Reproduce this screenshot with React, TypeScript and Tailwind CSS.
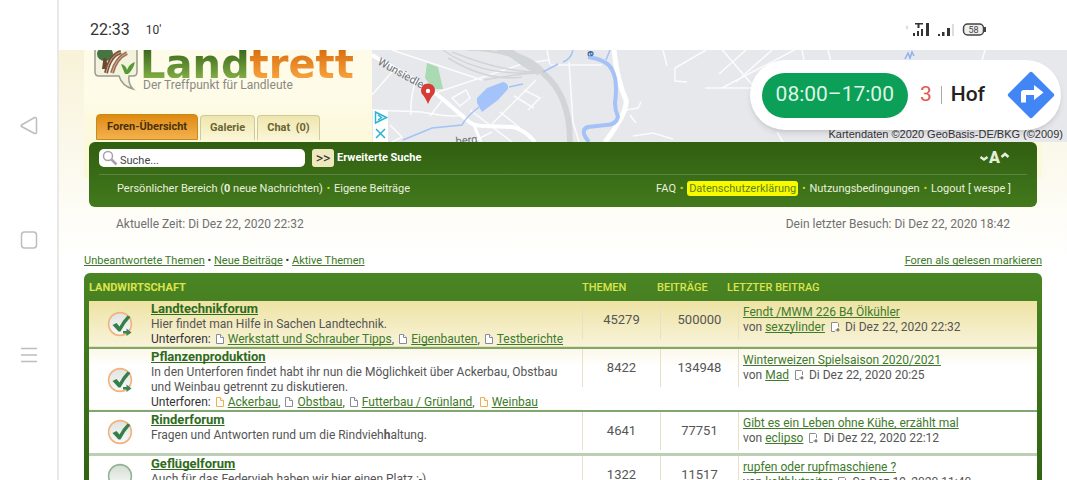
import type { ReactNode } from 'react';

type Sub = { name: string; unread?: boolean };

type Forum = {
  title: string;
  text: ReactNode;
  subs: Sub[];
  icon: 'unreadSub' | 'unread' | 'read';
  topics: string;
  posts: string;
  last: string;
  author: string;
  date: string;
  rowClass: string;
};

const forums: Forum[] = [
  {
    title: 'Landtechnikforum',
    text: 'Hier findet man Hilfe in Sachen Landtechnik.',
    subs: [{ name: 'Werkstatt und Schrauber Tipps' }, { name: 'Eigenbauten' }, { name: 'Testberichte' }],
    icon: 'unreadSub',
    topics: '45279',
    posts: '500000',
    last: 'Fendt /MWM 226 B4 Ölkühler',
    author: 'sexzylinder',
    date: 'Di Dez 22, 2020 22:32',
    rowClass: 'h-[47px] border-b-2 border-[#7fa673] bg-linear-to-b from-[#eee3a3] to-[#f8f3da]',
  },
  {
    title: 'Pflanzenproduktion',
    text: 'In den Unterforen findet habt ihr nun die Möglichkeit über Ackerbau, Obstbau und Weinbau getrennt zu diskutieren.',
    subs: [
      { name: 'Ackerbau', unread: true },
      { name: 'Obstbau' },
      { name: 'Futterbau / Grünland' },
      { name: 'Weinbau', unread: true },
    ],
    icon: 'unreadSub',
    topics: '8422',
    posts: '134948',
    last: 'Winterweizen Spielsaison 2020/2021',
    author: 'Mad',
    date: 'Di Dez 22, 2020 20:25',
    rowClass: 'h-[62px] border-b-2 border-[#7fa673] bg-linear-to-b from-[#fbf8e8] to-white to-30%',
  },
  {
    title: 'Rinderforum',
    text: (
      <>
        Fragen und Antworten rund um die Rindvieh<b>h</b>altung.
      </>
    ),
    subs: [],
    icon: 'unread',
    topics: '4641',
    posts: '77751',
    last: 'Gibt es ein Leben ohne Kühe, erzählt mal',
    author: 'eclipso',
    date: 'Di Dez 22, 2020 22:12',
    rowClass: 'h-[43px] border-b-3 border-[#bccfb5] bg-white',
  },
  {
    title: 'Geflügelforum',
    text: 'Auch für das Federvieh haben wir hier einen Platz :-)',
    subs: [],
    icon: 'read',
    topics: '1322',
    posts: '11517',
    last: 'rupfen oder rupfmaschiene ?',
    author: 'kaltblutreiter',
    date: 'So Dez 19, 2020 11:40',
    rowClass: 'h-[43px] border-b-2 border-[#7fa673] bg-white',
  },
];

function PageIcon({ color }: { color: string }) {
  return (
    <svg viewBox="0 0 8 10" className="mr-1 ml-[2px] inline-block h-[10px] w-2 align-[-1px]" fill="#fff" stroke={color}>
      <path d="M.5.5h4l3 3v6h-7z" />
      <path d="M4.5.5v3h3" />
    </svg>
  );
}

function LastPostIcon() {
  return (
    <svg viewBox="0 0 10 10" className="mx-[5px] inline-block size-[10px] align-[-1px]" fill="none" stroke="#8d8d8d">
      <path d="M5 9.500H1.500V.5h6l1 1V5" fill="#fff" />
      <path d="M5.500 8h4M8 6v3.500" stroke="#555" />
    </svg>
  );
}

function StateIcon({ kind }: { kind: Forum['icon'] }) {
  return (
    <svg viewBox="0 0 26 26" className="mx-auto size-[26px]">
      <defs>
        <linearGradient id={`disc-${kind}`} x1="0" y1="0" x2="0" y2="1">
          <stop offset="0" stopColor={kind === 'read' ? '#d3ddd3' : '#dfe3df'} />
          <stop offset="1" stopColor="#fafafa" />
        </linearGradient>
      </defs>
      <circle cx="13" cy="13" r="11.400" fill={`url(#disc-${kind})`} stroke={kind === 'read' ? '#8fb394' : '#f2b27c'} strokeWidth="1.600" />
      {kind !== 'read' && <path d="M5.500 14l4-2 3 3.500Q16 9 20.500 4.500l3 1.500Q18 12 13.500 20.500h-2z" fill="#357f49" />}
      {kind === 'unreadSub' && <path d="M16 20h3.500v-2.500l5 4-5 3.500v-2.500H16z" fill="#3b8350" />}
    </svg>
  );
}

function LogoMark() {
  return (
    <svg viewBox="0 0 44 42" className="h-[42px] w-11 shrink-0">
      <path d="M1-4v26q0 4 4 4h20q3 10 14 13-5-5-4-13h4q4 0 4-4V-4z" fill="#f3f2dc" stroke="#9b9c8c" strokeWidth="1.500" />
      <ellipse cx="11" cy="4" rx="8" ry="7" fill="#467443" />
      <path d="M9.500 8h3l1 11H8z" fill="#6b4a2c" />
      <path d="M12 23Q16 5 27 2" fill="none" stroke="#7c4f38" strokeWidth="4" />
      <path d="M18 23Q22 8 33 3" fill="none" stroke="#a06e54" strokeWidth="4" />
      <path d="M12 23Q16 5 27 2M18 23Q22 8 33 3" fill="none" stroke="#d9c3b0" strokeWidth=".8" />
      <path d="M27 14q5 1 6 6 2-6 8-8-2 8-7 12h-3q-2-5-4-10z" fill="#559a35" />
    </svg>
  );
}

function StreetMap() {
  return (
    <svg viewBox="0 0 695 92" preserveAspectRatio="xMinYMin slice" className="block h-full w-full" fill="none">
      <rect width="1400" height="92" fill="#e7e8ec" />
      <g stroke="#fff" strokeWidth="1.500" opacity=".85">
        <path d="M20 22L0 45M45 28Q38 45 39 65M0 60L50 62Q80 68 92 65M18 75l12 12L20 92M72 48L58 66M66 42L150 14 176 10M80 48l14-8 4 8-10 8zM98 60L140 92M120 74L164 30M128 62l20 16M142 46l20 12M152 40l16 8-12 12M175 0l3 14M178 15h52M197 12l4 60 6 20M20 0L110 30M100 92l20-10" />
        <path d="M291 0l4 16M334 0L303 18v13l12 1M333 38h50l-36-42M374 0L347 24M430-4L350 38M400 0L364 32M430 0l2 10M456 0l3 12M613 0l-4 14M254 60l12-2 3-6M258 65l6 8M261 86l20-3 20 6M405 82l6 10" />
      </g>
      <g stroke="#d2d5d8">
        <path d="M71 0Q110 28 171 22M76 8Q115 32 150 27M80 2Q130 22 165 22M95 0Q140 0 171 22M110 0Q145 2 171 25M112 30Q145 24 165 23" strokeWidth="1.500" />
        <path d="M125 0Q160 8 171 23Q198 45 198 92" strokeWidth="6" />
        <path d="M135 0Q150 12 168 22" strokeWidth="8" />
      </g>
      <path d="M0 5L51 35 66 45 95 70Q100 76 112 76L141 77Q153 80 163 92" stroke="#fff" strokeWidth="4" />
      <path d="M101 73l8 19" stroke="#fff" strokeWidth="3" />
      <path d="M242 0Q245 30 254 50 256 62 233 92" stroke="#fff" strokeWidth="5" />
      <g stroke="#a4c2f8">
        <path d="M216 7Q236 10 240 20 246 30 243 53 243 60 246 67 244 75 234 75L216 77Q207 80 217 92" strokeWidth="4" />
        <path d="M238 0l-4 10M201 0Q199 9 191 12M186 14L171 22M151 34l-14 3M107 57Q94 67 90 75L60 78 31 90" strokeWidth="1.500" />
      </g>
      <path d="M105 48L115 38 131 32Q137 33 136 39L126 50 110 62 105 53z" fill="#a4c3fa" />
      <path d="M55 13L66 17 71 39H61L53 28z" fill="#a9dab4" />
      <text transform="translate(5 14) rotate(29)" fontSize="11" fill="#6b6f73" className="font-[Roboto]">Wunsiedler</text>
      <text transform="translate(84 95) rotate(-6)" fontSize="11" fill="#6b6f73" className="font-[Roboto]">berg</text>
      <text transform="translate(215 -2) rotate(84)" fontSize="11" fontWeight="700" fill="#3a6aa8" className="font-[Roboto]">le</text>
      <path d="M533 9l3-6 2 5 2-6 2 4" stroke="#8fb2ee" strokeWidth="1.500" />
      <path d="M56 54Q53 47 50 44A7 7 0 1 1 62 44Q59 47 56 54z" fill="#d93a36" />
      <circle cx="56" cy="41" r="2.200" fill="#fff" />
      <path d="M1 60h15v32H1z" fill="#fff" />
      <path d="M3.500 62v11l11-5.500zM6 65l3.500 2.500L6 70M4 79l9 9M13 79l-9 9" stroke="#2cb3d0" strokeWidth="1.500" />
    </svg>
  );
}

function NavRail() {
  return (
    <aside className="flex w-[59px] shrink-0 flex-col items-center border-r-2 border-[#e9e9e9] bg-white pt-[115px]">
      <svg viewBox="0 0 18 240" className="h-[250px] w-[18px]" fill="none" stroke="#bdbdbd" strokeWidth="1.500">
        <path d="M1.500 5L14.500-2.500Q16.500-3 16.500-1V12Q16.500 14 14.500 13.500L1.500 6.500Q.5 5.800 1.500 5z" />
        <rect x="1.500" y="112" width="15" height="16" rx="3" />
        <path d="M1 228.500h16M1 235h16M1 241.500h16" />
      </svg>
    </aside>
  );
}

function StatusBar() {
  return (
    <div className="flex h-[50px] shrink-0 items-center bg-white pt-[10px] pr-20 pl-[31px] text-[#333]">
      <span className="text-base">22:33</span>
      <span className="ml-4 text-xs">10′</span>
      <svg viewBox="0 0 82 16" className="ml-auto h-4 w-[82px]">
        <path d="M2 3l1.500 2.500L2 8 .5 5.500z" fill="#ddd" />
        <path d="M8 11h2v3H8zM12 9h2v5h-2zM16 7h2v7h-2zM21 1h3v13h-3zM10 1h8v1.500h-3.500V6h-2V2.500H10zM33 12h2v2h-2zM37 10h2.500v4H37zM42 6h3v8h-3z" fill="#333" />
        <path d="M47 2h2v12h-2z" fill="#ddd" />
        <rect x="58.500" y="2" width="20" height="11" rx="4" fill="#eee" stroke="#444" strokeWidth="1.500" />
        <path d="M80 5v5" stroke="#444" strokeWidth="2" />
        <text x="68.500" y="11" fontSize="9" textAnchor="middle" fill="#444">58</text>
      </svg>
    </div>
  );
}

function MapAd() {
  return (
    <div className="relative min-w-0 flex-1 overflow-hidden">
      <StreetMap />
      <span className="absolute right-1 bottom-0 font-['Liberation_Sans'] text-[11px] leading-4 whitespace-nowrap text-[#333]">
        Kartendaten ©2020 GeoBasis-DE/BKG (©2009)
      </span>
      <div className="absolute top-[10px] right-[6px] flex h-[70px] items-center rounded-full bg-white pr-[6px] pl-3 text-[21px] text-[#222] shadow-md">
        <span className="flex h-[45px] items-center rounded-full bg-[#0b9f57] px-[14px] text-[#ddf6e6]">08:00–17:00</span>
        <span className="ml-3 text-[#e05a50]">3</span>
        <span className="mx-[9px] h-[18px] w-px bg-[#aaa]" />
        <span className="font-medium">Hof</span>
        <svg viewBox="0 0 48 48" className="ml-[22px] size-12">
          <path d="M22.500 1.500q1.500-1.500 3 0l21 21q1.500 1.500 0 3l-21 21q-1.500 1.500-3 0l-21-21q-1.500-1.500 0-3z" fill="#4285f4" />
          <path d="M14 31.500V22q0-3 3-3h10v-5l9.500 7.500L27 29v-5h-8v7.500z" fill="#fff" />
        </svg>
      </div>
    </div>
  );
}

function Masthead() {
  return (
    <header className="flex h-[92px]">
      <div className="flex w-[313px] shrink-0 flex-col pl-[25px]">
        <div className="flex h-[42px] bg-[#fefbe8] pl-[10px]">
          <LogoMark />
          <div className="pl-[2px]">
            <div className="flex font-['DejaVu_Sans'] text-[40px] leading-7 font-bold">
              <span className="bg-linear-to-b from-[#3c6a1c] to-[#7fac44] bg-clip-text text-transparent">Land</span>
              <span className="bg-linear-to-b from-[#d96f0c] to-[#f7a13c] bg-clip-text text-transparent">trett</span>
            </div>
            <div className="pl-[3px] text-xs leading-[14px] text-[#8a8a84]">Der Treffpunkt für Landleute</div>
          </div>
        </div>
        <nav className="flex flex-1 items-end gap-[2px] bg-linear-to-b from-[#fefbe8] to-[#fcf8da] pb-[2px] pl-3 text-[11px] font-bold text-[#6b6433]">
          <a href="#foren" className="rounded-t border border-[#c98a1d] bg-linear-to-b from-[#e08a08] to-[#f3b14c] px-[10px] py-1 text-[#4a3208]">
            Foren-Übersicht
          </a>
          <a href="#galerie" className="rounded-t border border-b-0 border-[#cdc99b] bg-linear-to-b from-[#efe6ad] to-[#faf6d8] px-[9px] py-1">
            Galerie
          </a>
          <a href="#chat" className="rounded-t border border-b-0 border-[#cdc99b] bg-linear-to-b from-[#efe6ad] to-[#faf6d8] px-[9px] py-1">
            Chat&nbsp; (0)
          </a>
        </nav>
      </div>
      <MapAd />
    </header>
  );
}

function Dot() {
  return <span className="mx-px text-[#d5d80c]"> • </span>;
}

function HeaderBar() {
  return (
    <div className="mx-[25px] bg-linear-to-b from-[#fcf8da] from-55% to-transparent to-55% px-[5px]">
      <div className="h-[65px] rounded-md bg-linear-to-b from-[#305f10] to-[#43791d] px-[10px] pt-2 text-[11px] text-[#e9f0dc]">
        <form className="flex h-4 items-center" onSubmit={(e) => e.preventDefault()}>
          <div className="relative">
            <input
              type="search"
              aria-label="Suche"
              placeholder="Suche..."
              className="block h-[18px] w-[206px] rounded-[5px] bg-white pt-1 pl-[21px] text-[11px] leading-[14px] text-[#333] placeholder:text-[#444]"
            />
            <svg viewBox="0 0 16 16" className="absolute top-px left-[3px] size-4" fill="none" stroke="#a99fae">
              <circle cx="6" cy="6" r="4.500" strokeWidth="1.500" />
              <path d="M9.500 9.500l5 5" strokeWidth="2.500" />
            </svg>
          </div>
          <button className="ml-[7px] h-[18px] w-[22px] rounded-[3px] bg-[#f0e8bd] text-sm leading-[18px] text-[#333]">&gt;&gt;</button>
          <a href="#suche" className="ml-[3px] font-bold text-white">Erweiterte Suche</a>
          <a href="#schrift" aria-label="Schriftgröße ändern" className="mr-[17px] ml-auto flex items-center text-base font-black text-[#e5eeda]">
            <svg viewBox="0 0 10 12" className="h-3 w-[10px]" fill="none" stroke="currentColor" strokeWidth="2.500">
              <path d="M1.500 5l3.500 2.500L8.500 5" />
            </svg>
            A
            <svg viewBox="0 0 10 12" className="h-3 w-[10px]" fill="none" stroke="currentColor" strokeWidth="2.500">
              <path d="M1.500 5L5 2l3.500 3" />
            </svg>
          </a>
        </form>
        <div className="mt-2 flex justify-between border-t border-[#5d8540] pt-[6px] pr-4 pl-[18px] leading-4">
          <div>
            <a href="#bereich">Persönlicher Bereich (<b>0</b> neue Nachrichten)</a>
            <Dot />
            <a href="#eigene">Eigene Beiträge</a>
          </div>
          <div>
            <a href="#faq">FAQ</a>
            <Dot />
            <a href="#datenschutz" className="rounded-[3px] bg-[#f8fb00] px-[2px] py-px text-[#65801a]">Datenschutzerklärung</a>
            <Dot />
            <a href="#nutzung">Nutzungsbedingungen</a>
            <Dot />
            <a href="#logout">Logout [ wespe ]</a>
          </div>
        </div>
      </div>
    </div>
  );
}

const link = 'text-[#407a2a] underline [text-decoration-skip-ink:none]';

function ForumTable() {
  return (
    <div className="mx-[25px] rounded-t-md bg-linear-to-b from-[#4a8524] to-[#2f6010] px-[5px]">
      <table className="w-full table-fixed border-collapse text-xs leading-[15px] text-[#555]">
        {/* head and body cells start at different x, hence the narrow extra columns */}
        <colgroup>
          <col className="w-[62px]" />
          <col />
          <col className="w-[75px]" />
          <col className="w-[3px]" />
          <col className="w-[67px]" />
          <col className="w-[11px]" />
          <col className="w-[299px]" />
        </colgroup>
        <thead>
          <tr className="h-7 text-left text-[11px] text-[#dde34c] uppercase">
            <th colSpan={2} className="font-bold">Landwirtschaft</th>
            <th className="font-medium">Themen</th>
            <th colSpan={2} className="font-medium">Beiträge</th>
            <th colSpan={2} className="font-medium">Letzter Beitrag</th>
          </tr>
        </thead>
        <tbody>
          {forums.map((f) => (
            <tr key={f.title} className={f.rowClass}>
              <td>
                <StateIcon kind={f.icon} />
              </td>
              <td className="pr-2 align-top">
                <a href="#forum" className="text-[13px] font-bold text-[#2f6b1c] underline [text-decoration-skip-ink:none]">{f.title}</a>
                <div>{f.text}</div>
                {f.subs.length > 0 && (
                  <div className="whitespace-nowrap">
                    <span className="text-[#333]">Unterforen: </span>
                    {f.subs.map((s, i) => (
                      <span key={s.name}>
                        {i > 0 && ', '}
                        <PageIcon color={s.unread ? '#eeb04c' : '#8a8a9a'} />
                        <a href="#unterforum" className={link}>{s.name}</a>
                      </span>
                    ))}
                  </div>
                )}
              </td>
              <td colSpan={2} className="align-top">
                <div className="h-[38px] border-l border-[#e6e1c3] text-center text-[13px] leading-[38px]">{f.topics}</div>
              </td>
              <td colSpan={2} className="align-top">
                <div className="h-[38px] border-l border-[#e6e1c3] text-center text-[13px] leading-[38px]">{f.posts}</div>
              </td>
              <td className="align-top">
                <div className="h-[38px] border-l border-[#e6e1c3] pt-1 pl-1 whitespace-nowrap">
                  <a href="#beitrag" className={link}>{f.last}</a>
                  <div>
                    von <a href="#mitglied" className={link}>{f.author}</a>
                    <LastPostIcon />
                    {f.date}
                  </div>
                </div>
              </td>
            </tr>
          ))}
        </tbody>
      </table>
    </div>
  );
}

export default function App() {
  return (
    <div className="flex h-screen overflow-hidden bg-white font-[Roboto,sans-serif]">
      <NavRail />
      <div className="flex min-w-0 flex-1 flex-col">
        <StatusBar />
        <main className="min-h-0 flex-1 overflow-hidden bg-linear-to-b from-[#f7f2d8] via-[#fdfcf4] via-35% to-white to-50%">
          <Masthead />
          <HeaderBar />
          <div className="flex justify-between px-[57px] pt-2 text-xs leading-[18px] text-[#707070]">
            <span>Aktuelle Zeit: Di Dez 22, 2020 22:32</span>
            <span>Dein letzter Besuch: Di Dez 22, 2020 18:42</span>
          </div>
          <div className="flex justify-between px-[25px] pt-5 pb-1 text-[11px] leading-4 text-[#333]">
            <div>
              <a href="#unbeantwortet" className={link}>Unbeantwortete Themen</a> •{' '}
              <a href="#neue" className={link}>Neue Beiträge</a> •{' '}
              <a href="#aktive" className={link}>Aktive Themen</a>
            </div>
            <a href="#gelesen" className={link}>Foren als gelesen markieren</a>
          </div>
          <ForumTable />
        </main>
      </div>
    </div>
  );
}
